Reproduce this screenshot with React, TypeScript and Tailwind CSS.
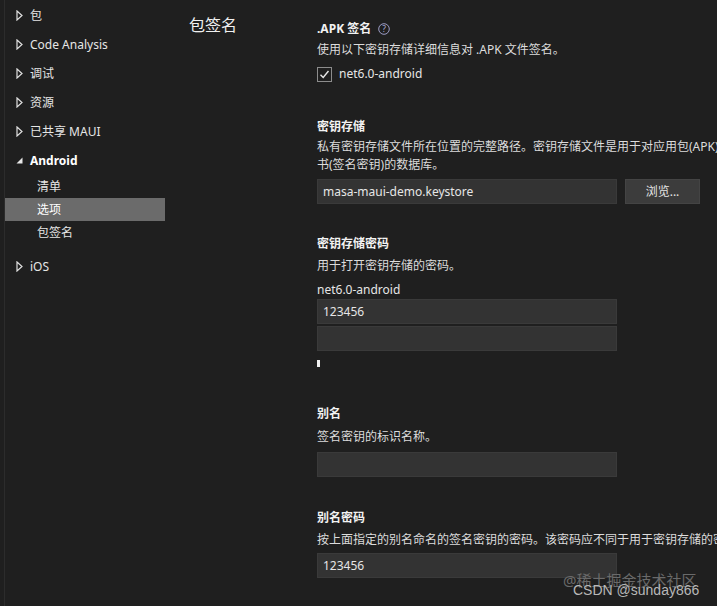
import React from "react";

const font = { fontFamily: '"Noto Sans", "Noto Sans CJK SC", sans-serif' };

function Closed() {
  return (
    <svg width="7" height="11" viewBox="0 0 7 11" className="shrink-0">
      <path d="M1 1 L6 5.5 L1 10 Z" fill="none" stroke="#e0e0e0" strokeWidth="1.2" strokeLinejoin="miter" />
    </svg>
  );
}

function Open() {
  return (
    <svg width="7" height="7" viewBox="0 0 7 7" className="shrink-0">
      <path d="M6.5 0.5 L6.5 6.5 L0.5 6.5 Z" fill="#e8e8e8" />
    </svg>
  );
}

function TopItem({ label, open = false, bold = false }: { label: string; open?: boolean; bold?: boolean }) {
  return (
    <div className="h-[29px] flex items-center pl-[11px]">
      <div className="w-[14px] flex items-center justify-start">{open ? <Open /> : <Closed />}</div>
      <span className={bold ? "font-bold text-white" : "text-[#e6e6e6]"}>{label}</span>
    </div>
  );
}

function SubItem({ label, selected = false }: { label: string; selected?: boolean }) {
  return (
    <div className={"h-[23px] flex items-center pl-[32px] " + (selected ? "bg-[#6b6b6b] text-white" : "text-[#e6e6e6]")}>
      {label}
    </div>
  );
}

function Input({ value, className = "" }: { value?: string; className?: string }) {
  return (
    <div className={"h-[25px] w-[300px] bg-[#333333] border border-[#3a3a3a] flex items-center pl-[5px] text-[#e6e6e6] " + className}>
      {value}
    </div>
  );
}

function Title({ children, className = "" }: { children: React.ReactNode; className?: string }) {
  return <div className={"font-bold text-[#f2f2f2] leading-[18px] " + className}>{children}</div>;
}

function Desc({ children, className = "" }: { children: React.ReactNode; className?: string }) {
  return <div className={"text-[#dcdcdc] leading-[18px] whitespace-nowrap " + className}>{children}</div>;
}

export default function App() {
  return (
    <div className="relative w-[717px] h-[606px] overflow-hidden bg-[#1f1f1f] text-[12px] flex" style={font}>
      {/* Sidebar */}
      <div className="ml-[4px] w-[161px] border-l border-[#2c2c2c] pt-[1px] shrink-0">
        <TopItem label="包" />
        <TopItem label="Code Analysis" />
        <TopItem label="调试" />
        <TopItem label="资源" />
        <TopItem label="已共享 MAUI" />
        <TopItem label="Android" open bold />
        <SubItem label="清单" />
        <SubItem label="选项" selected />
        <SubItem label="包签名" />
        <div className="h-[8px]" />
        <TopItem label="iOS" />
      </div>

      {/* Heading */}
      <div className="ml-[24px] w-[128px] shrink-0 pt-[14px]">
        <div className="text-[16px] leading-[22px] text-[#f0f0f0]">包签名</div>
      </div>

      {/* Content */}
      <div className="flex flex-col pt-[20px] min-w-0">
        <div className="flex items-center gap-[7px] h-[18px]">
          <Title>.APK 签名</Title>
          <svg width="12" height="12" viewBox="0 0 12 12">
            <circle cx="6" cy="6" r="5.3" fill="none" stroke="#a9a9d6" strokeWidth="0.9" />
            <text x="6" y="9" textAnchor="middle" fontSize="8.5" fill="#a9a9d6" fontFamily="Noto Sans, sans-serif">?</text>
          </svg>
        </div>
        <Desc className="mt-[3px]">使用以下密钥存储详细信息对 .APK 文件签名。</Desc>
        <div className="mt-[6px] flex items-center h-[18px]">
          <div className="w-[15px] h-[15px] border border-[#8c8c8c] bg-[#1f1f1f] flex items-center justify-center">
            <svg width="11" height="11" viewBox="0 0 11 11">
              <path d="M1.5 5.8 L4.2 8.5 L9.5 2" fill="none" stroke="#e8e8e8" strokeWidth="1.4" />
            </svg>
          </div>
          <span className="ml-[7px] text-[#e6e6e6]">net6.0-android</span>
        </div>

        <Title className="mt-[35px]">密钥存储</Title>
        <Desc className="mt-[2px]">私有密钥存储文件所在位置的完整路径。密钥存储文件是用于对应用包(APK)签名的证</Desc>
        <Desc>书(签名密钥)的数据库。</Desc>
        <div className="mt-[5px] flex">
          <Input value="masa-maui-demo.keystore" />
          <div className="ml-[8px] h-[25px] w-[75px] bg-[#3c3c3c] border border-[#444444] flex items-center justify-center text-[#e6e6e6]">
            浏览...
          </div>
        </div>

        <Title className="mt-[31px]">密钥存储密码</Title>
        <Desc className="mt-[4px]">用于打开密钥存储的密码。</Desc>
        <div className="mt-[6px] leading-[18px] text-[#e6e6e6]">net6.0-android</div>
        <Input value="123456" />
        <Input className="mt-[2px]" />
        <div className="mt-[9px] w-[3px] h-[7px] bg-[#f0f0f0]" />

        <Title className="mt-[38px]">别名</Title>
        <Desc className="mt-[5px]">签名密钥的标识名称。</Desc>
        <Input className="mt-[6px]" />

        <Title className="mt-[32px]">别名密码</Title>
        <Desc className="mt-[4px]">按上面指定的别名命名的签名密钥的密码。该密码应不同于用于密钥存储的密码。</Desc>
        <Input className="mt-[4px]" value="123456" />
      </div>

      {/* Watermark */}
      <div className="absolute left-[563px] top-[570px] text-[15px] leading-[20px] text-[#6a6a6a] whitespace-nowrap" style={font}>
        @稀土掘金技术社区
      </div>
      <div className="absolute left-[573px] top-[580px] text-[14px] leading-[20px] text-[#b8b8b8] whitespace-nowrap" style={{ fontFamily: '"Liberation Sans", sans-serif' }}>
        CSDN @sunday866
      </div>
    </div>
  );
}
